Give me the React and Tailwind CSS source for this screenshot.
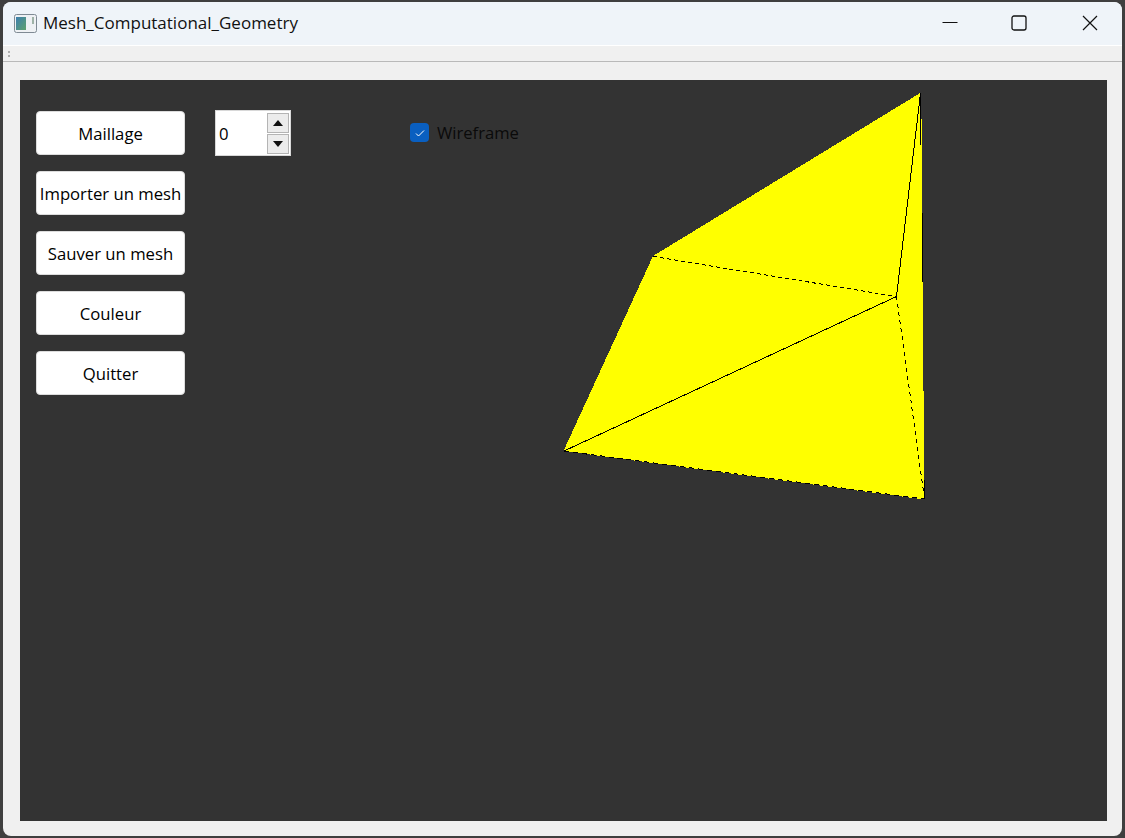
const FONT = "font-['Open_Sans','Noto_Sans',sans-serif]";

function AppIcon() {
  return (
    <svg width="23" height="19" viewBox="0 0 23 19" className="shrink-0 -ml-px">
      <rect x="0.5" y="0.5" width="22" height="18" rx="2" fill="#eef1f4" stroke="#7f8a94" />
      <defs>
        <linearGradient id="g" x1="0" y1="0" x2="1" y2="1">
          <stop offset="0" stopColor="#3c7fb0" />
          <stop offset="1" stopColor="#5fa26d" />
        </linearGradient>
      </defs>
      <rect x="2" y="3" width="10" height="13" fill="url(#g)" />
      <rect x="18" y="3" width="2" height="7" fill="#9fb3a8" />
    </svg>
  );
}

function WindowControls() {
  return (
    <div className="flex items-center">
      <svg width="16" height="16" viewBox="0 0 16 16" className="mr-[53px]">
        <path d="M0.5 7.5H15.5" stroke="#111" strokeWidth="1" />
      </svg>
      <svg width="16" height="16" viewBox="0 0 16 16" className="mr-[55px]">
        <rect x="1" y="1" width="14" height="14" rx="2" fill="none" stroke="#111" strokeWidth="1.3" />
      </svg>
      <svg width="16" height="16" viewBox="0 0 16 16" className="mr-6">
        <path d="M1 1L15 15M15 1L1 15" stroke="#111" strokeWidth="1.2" />
      </svg>
    </div>
  );
}

function Btn({ children }) {
  return (
    <button className="w-[149px] h-11 pt-px bg-white rounded-[4px] border border-[#dcdcdc] text-black text-[16.7px] whitespace-nowrap flex items-center justify-center">
      {children}
    </button>
  );
}

function Spin() {
  return (
    <div className="ml-[30px] -mt-px w-[76px] h-[46px] bg-white border border-[#d8d8d8] flex items-center justify-between pl-[3px] pr-px">
      <span className="text-[16.7px] text-black pt-0.5">0</span>
      <div className="flex flex-col gap-px">
        <div className="w-[22px] h-[20px] bg-[#ececec] border border-[#b4b4b4] flex items-center justify-center">
          <svg width="10" height="6" viewBox="0 0 10 6"><path d="M5 0L10 6H0Z" fill="#111" /></svg>
        </div>
        <div className="w-[22px] h-[20px] bg-[#ececec] border border-[#b4b4b4] flex items-center justify-center">
          <svg width="10" height="6" viewBox="0 0 10 6"><path d="M0 0H10L5 6Z" fill="#111" /></svg>
        </div>
      </div>
    </div>
  );
}

function Mesh() {
  return (
    <svg
      className="absolute inset-0"
      width="1087"
      height="741"
      viewBox="20 80 1087 741"
      shapeRendering="crispEdges"
    >
      <polygon points="921,92.5 653,256 563.5,451 924,499.5 923,282 922,145" fill="#ffff00" />
      <g fill="none" stroke="#000" strokeWidth="1">
        <path d="M920.5 93L896.5 296.5" />
        <path d="M564 451L896.5 296.5" />
        <path d="M920.5 93L921 145" />
        <path d="M922.5 213L922.5 282" />
        <path d="M653.5 256.5L896.5 296.5" strokeDasharray="4 3" />
        <path d="M896.5 296.5L924.5 499" strokeDasharray="4 4" />
        <path d="M564 451L924.5 499" strokeDasharray="5 4" />
        <path d="M924.5 480L924.5 499" />
      </g>
    </svg>
  );
}

export default function App() {
  return (
    <div className={`w-[1125px] h-[838px] bg-[#3f3f3f] pt-0.5 pb-0.5 px-[3px] overflow-hidden ${FONT}`}>
      <div className="w-full h-full rounded-lg overflow-hidden flex flex-col bg-[#f0f0f0]">
        <div className="h-[43px] shrink-0 bg-[#eff4f9] border-b border-transparent flex items-center justify-between pl-3">
          <div className="flex items-center gap-1.5">
            <AppIcon />
            <span className="text-[17px] text-[#111]">Mesh_Computational_Geometry</span>
          </div>
          <WindowControls />
        </div>
        <div className="h-px bg-white shrink-0" />
        <div className="h-4 shrink-0 border-b border-[#b9b9b9] flex items-center pl-[5px]">
          <div className="flex flex-col gap-[2px]">
            <div className="w-0.5 h-0.5 bg-[#b0b0b0]" />
            <div className="w-0.5 h-0.5 bg-[#b0b0b0]" />
          </div>
        </div>
        <div className="flex-1 pt-[18px] pb-[15px] pl-[17px] pr-[15px] flex flex-col">
          <div className="flex-1 relative bg-[#333333] overflow-hidden pl-4 pt-[31px] flex items-start">
            <Mesh />
            <div className="relative flex flex-col gap-4">
              <Btn>Maillage</Btn>
              <Btn>Importer un mesh</Btn>
              <Btn>Sauver un mesh</Btn>
              <Btn>Couleur</Btn>
              <Btn>Quitter</Btn>
            </div>
            <div className="relative"><Spin /></div>
            <div className="relative ml-[119px] mt-3 flex items-center gap-2 h-[19px]">
              <div className="w-[19px] h-[19px] rounded-[4px] bg-[#0a5fc0] flex items-center justify-center">
                <svg width="10" height="8" viewBox="0 0 10 8">
                  <path d="M1 4.5L3.5 7L9 1.5" fill="none" stroke="#fff" strokeWidth="1" />
                </svg>
              </div>
              <span className="text-[16.6px] text-[#0a0a0a] mt-px">Wireframe</span>
            </div>
          </div>
        </div>
      </div>
    </div>
  );
}
